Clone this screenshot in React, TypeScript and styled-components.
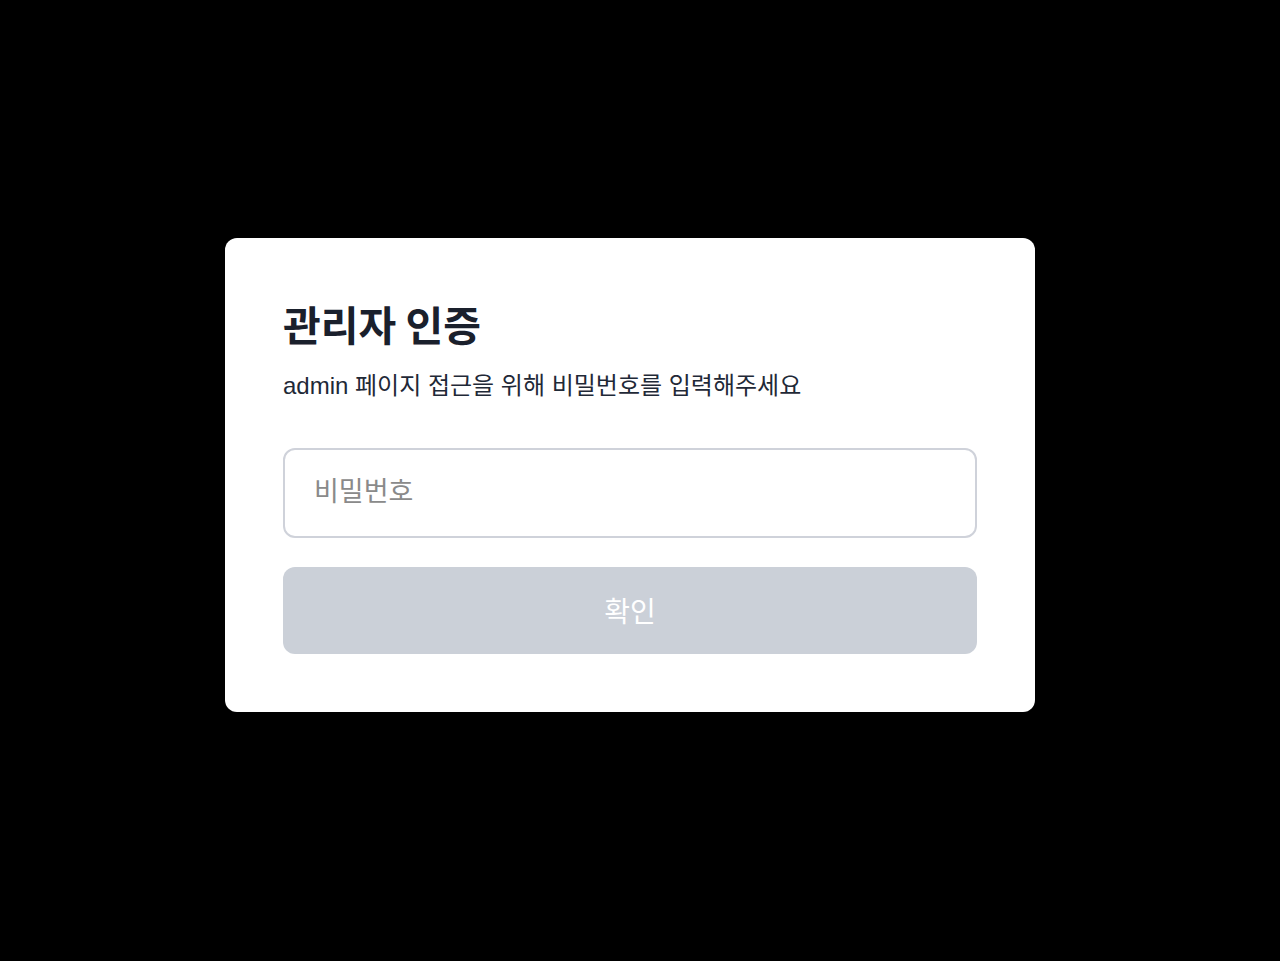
import styled, { createGlobalStyle } from "styled-components";

const GlobalStyle = createGlobalStyle`
  html, body {
    margin: 0;
    padding: 0;
    background: #000;
  }
  body {
    font-family: "Liberation Sans", "Noto Sans CJK KR", sans-serif;
  }
  * {
    box-sizing: border-box;
  }
`;

const Backdrop = styled.div`
  width: 100%;
  height: 961px;
  padding: 0 20px 12px 0;
  background: #000;
  display: flex;
  align-items: center;
  justify-content: center;
`;

const Card = styled.div`
  width: 810px;
  background: #fff;
  border-radius: 12px;
  padding: 58px;
  display: flex;
  flex-direction: column;
`;

const Title = styled.h1`
  margin: 0;
  font-family: "Noto Sans CJK KR", sans-serif;
  font-size: 41px;
  line-height: 54px;
  font-weight: 700;
  color: #1a202c;
`;

const Subtitle = styled.p`
  margin: 19px 0 0;
  font-size: 24px;
  line-height: 33px;
  color: #1f2937;
`;

const Form = styled.form`
  margin-top: 46px;
  display: flex;
  flex-direction: column;
  gap: 29px;
`;

const PasswordInput = styled.input`
  width: 100%;
  height: 90px;
  border: 2px solid #cfd2da;
  border-radius: 12px;
  padding: 0 29px;
  font-family: "Liberation Sans", "Noto Sans CJK KR", sans-serif;
  font-size: 27px;
  color: #111827;
  outline: none;

  &::placeholder {
    color: #8a8a8a;
  }
`;

const SubmitButton = styled.button<{ $disabled?: boolean }>`
  width: 100%;
  height: 87px;
  border: none;
  border-radius: 12px;
  background: ${(p) => (p.$disabled ? "#cbd0d8" : "#2563eb")};
  color: #fff;
  font-family: "Liberation Sans", "Noto Sans CJK KR", sans-serif;
  font-size: 28px;
  cursor: ${(p) => (p.$disabled ? "not-allowed" : "pointer")};
`;

const App = () => {
  return (
    <Backdrop>
      <GlobalStyle />
      <Card>
        <Title>관리자 인증</Title>
        <Subtitle>admin 페이지 접근을 위해 비밀번호를 입력해주세요</Subtitle>
        <Form onSubmit={(e) => e.preventDefault()}>
          <PasswordInput type="password" placeholder="비밀번호" />
          <SubmitButton type="submit" $disabled>
            확인
          </SubmitButton>
        </Form>
      </Card>
    </Backdrop>
  );
};

export default App;
